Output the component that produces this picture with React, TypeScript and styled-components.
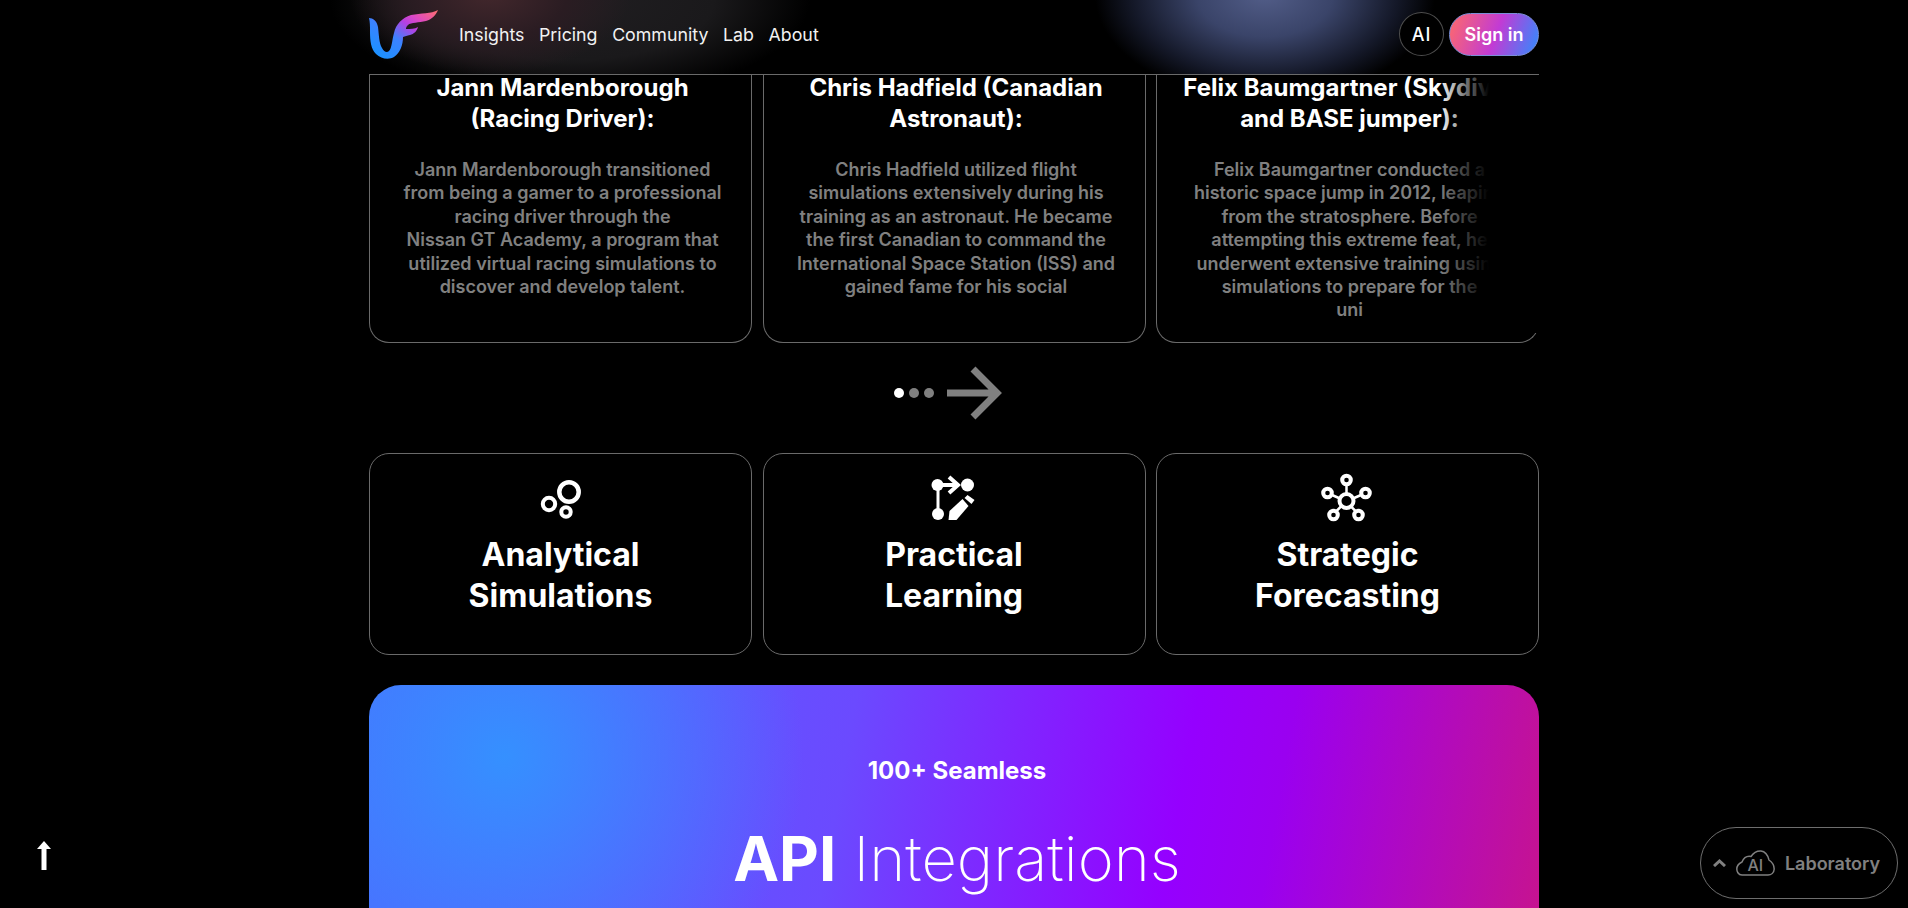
import React from 'react';
import styled, { createGlobalStyle } from 'styled-components';

const GlobalStyle = createGlobalStyle`
  html, body {
    margin: 0;
    height: 100%;
    background: #000;
    overflow: hidden;
  }
  body {
    font-family: Inter, "Liberation Sans", sans-serif;
    color: #fff;
  }
`;

const Page = styled.div`
  height: 908px;
  overflow: hidden;
  background: #000;
  display: flex;
  flex-direction: column;
`;

const Header = styled.header`
  flex: none;
  background:
    radial-gradient(ellipse 170px 105px at 1265px -5px, #525d88 0%, #3a4469 40%, #141828 78%, transparent 100%),
    radial-gradient(ellipse 140px 80px at 490px -5px, #42272c 0%, #2a1c22 55%, transparent 100%),
    radial-gradient(ellipse 240px 100px at 570px 0, #201e21 0%, #1a191b 60%, transparent 100%);
`;

const HeaderInner = styled.div`
  width: 1170px;
  height: 68px;
  margin: 0 auto;
  border-bottom: 1px solid #6a6a6a;
  display: flex;
  align-items: center;
  padding-bottom: 6px;
`;

const LogoMark = styled.svg`
  width: 69px;
  height: 49px;
  flex: none;
`;

const Nav = styled.nav`
  display: flex;
  gap: 14.6px;
  margin-left: 21px;
  font-size: 17.8px;
  color: #f2f2f2;
`;

const Actions = styled.div`
  margin-left: auto;
  display: flex;
  align-items: center;
  gap: 5px;
`;

const AiButton = styled.button`
  width: 45px;
  height: 44px;
  border-radius: 50%;
  border: 1px solid #4d4d4d;
  background: #000;
  color: #fff;
  font: 500 18px Inter, sans-serif;
  letter-spacing: 1px;
  padding: 0;
`;

const SignIn = styled.button`
  width: 90px;
  height: 43px;
  border-radius: 22px;
  border: 1px solid #7b8ed8;
  background: linear-gradient(110deg, #ff6a6a 0%, #c23bd4 52%, #2f8cff 100%);
  color: #fff;
  font: 600 18px Inter, sans-serif;
  padding: 0;
`;

const Main = styled.main`
  width: 1170px;
  margin: 0 auto;
`;

const Carousel = styled.div`
  position: relative;
  display: grid;
  grid-template-columns: repeat(3, 383px);
  gap: 10.5px;
`;

const EdgeFade = styled.div`
  position: absolute;
  top: 0;
  right: 0;
  width: 100px;
  height: 258px;
  background: linear-gradient(to right, rgba(0, 0, 0, 0) 0%, #000 50%);
`;

const StoryCard = styled.article`
  height: 268px;
  box-sizing: border-box;
  border: 1px solid #6a6a6a;
  border-top: none;
  border-radius: 0 0 20px 20px;
  padding: 0 24px 0 28px;
  text-align: center;
`;

const StoryTitle = styled.h3`
  margin: -3px -20px 0;
  font-size: 24px;
  line-height: 31px;
  font-weight: 700;
  white-space: pre;
`;

const StoryText = styled.p`
  margin: 24px -20px 0;
  font-size: 18px;
  line-height: 23.4px;
  font-weight: 600;
  color: #808080;
  white-space: pre;
`;

const Pager = styled.div`
  height: 110px;
  box-sizing: border-box;
  padding-bottom: 10px;
  display: flex;
  align-items: center;
  justify-content: center;
  gap: 5px;
`;

const Dot = styled.span<{ $active?: boolean }>`
  width: 10px;
  height: 10px;
  border-radius: 50%;
  background: ${p => (p.$active ? '#fff' : '#808080')};
`;

const PagerArrow = styled.svg`
  width: 56px;
  height: 56px;
  margin: 0 12px 0 8px;
`;

const Features = styled.div`
  display: grid;
  grid-template-columns: repeat(3, 383px);
  gap: 10.5px;
`;

const FeatureCard = styled.article`
  height: 202px;
  box-sizing: border-box;
  border: 1px solid #6a6a6a;
  border-radius: 20px;
  padding-top: 20px;
  display: flex;
  flex-direction: column;
  align-items: center;
`;

const FeatureIcon = styled.svg`
  width: 50px;
  height: 50px;
  flex: none;
  overflow: visible;
`;

const FeatureTitle = styled.h2`
  margin: 10px 0 0;
  font-size: 32px;
  line-height: 41px;
  font-weight: 700;
  text-align: center;
  white-space: pre-line;
`;

const ApiPanel = styled.section`
  margin-top: 30px;
  height: 300px;
  border-radius: 32px;
  background:
    radial-gradient(circle 300px at 135px 72px, #3590ff 0%, rgba(53, 144, 255, 0) 100%),
    linear-gradient(100deg, #4d6aff 0%, #6b4aff 40%, #9500ff 68%, #9a00f0 76%, #c8148c 100%);
  text-align: center;
  padding: 71px 0 0 6px;
  box-sizing: border-box;
`;

const ApiEyebrow = styled.div`
  font-size: 24px;
  line-height: 30px;
  font-weight: 700;
`;

const ApiTitle = styled.div`
  margin-top: 34px;
  font-size: 61.5px;
  line-height: 78px;
  font-weight: 200;

  strong {
    font-weight: 700;
  }
`;

const ScrollTop = styled.button`
  position: fixed;
  left: 37px;
  bottom: 38px;
  width: 14px;
  height: 29px;
  padding: 0;
  border: none;
  background: none;
  display: flex;
`;

const LabPill = styled.button`
  position: fixed;
  right: 10px;
  bottom: 9px;
  width: 198px;
  height: 72px;
  box-sizing: border-box;
  border: 1px solid #6e6e6e;
  border-radius: 36px;
  background: #000;
  color: #808080;
  font: 600 18px Inter, sans-serif;
  display: flex;
  align-items: center;
  justify-content: center;
  gap: 10px;
  padding: 0 5px 0 0;
`;

const stories = [
  {
    title: 'Jann Mardenborough\n(Racing Driver):',
    text: 'Jann Mardenborough transitioned\nfrom being a gamer to a professional\nracing driver through the\nNissan GT Academy, a program that\nutilized virtual racing simulations to\ndiscover and develop talent.',
  },
  {
    title: 'Chris Hadfield (Canadian\nAstronaut):',
    text: 'Chris Hadfield utilized flight\nsimulations extensively during his\ntraining as an astronaut. He became\nthe first Canadian to command the\nInternational Space Station (ISS) and\ngained fame for his social',
  },
  {
    title: 'Felix Baumgartner (Skydiver\nand BASE jumper):',
    text: 'Felix Baumgartner conducted a\nhistoric space jump in 2012, leaping\nfrom the stratosphere. Before\nattempting this extreme feat, he\nunderwent extensive training using\nsimulations to prepare for the\nuni',
  },
];

const Logo = () => (
  <LogoMark viewBox="0 0 69 49">
    <defs>
      <linearGradient id="logoGrad" x1="0.1" y1="0.85" x2="1" y2="0">
        <stop offset="0" stopColor="#1e90ff" />
        <stop offset="0.32" stopColor="#3c82ff" />
        <stop offset="0.58" stopColor="#b640e2" />
        <stop offset="0.72" stopColor="#dc48c4" />
        <stop offset="1" stopColor="#ff6f6a" />
      </linearGradient>
    </defs>
    <path
      fill="url(#logoGrad)"
      d="M0 8 C4 8 8 11 9 17 C10 25 10 33 13 38 C15 42 18 43 20 41 C23 38 23 30 25 23 C27 14 33 8 42 5 C52 3 62 4 69 0 C67 5 63 9 57 11 C50 13 42 12 39 15 C37 17 37 18 37 19 C41 19 46 19 49 17 C48 21 45 24 41 25 C38 26 36 26 34 27 C34 35 31 43 25 47 C20 50 12 49 7 44 C2 39 1 31 1 22 C1 16 1 12 0 8 Z"
    />
  </LogoMark>
);

const CirclesIcon = () => (
  <FeatureIcon viewBox="0 0 50 50" fill="none" stroke="#fff" strokeWidth="4.500">
    <circle cx="33" cy="18" r="9.700" />
    <circle cx="13" cy="30" r="6.200" strokeWidth="4" />
    <circle cx="30" cy="38" r="4.700" strokeWidth="4" />
  </FeatureIcon>
);

const BranchEditIcon = () => (
  <FeatureIcon viewBox="0 0 50 50" fill="#fff">
    <circle cx="8.500" cy="11" r="6" />
    <circle cx="9" cy="40" r="6" />
    <circle cx="38.500" cy="11" r="6.500" />
    <rect x="7.500" y="11" width="3" height="28" />
    <rect x="8.500" y="9" width="20" height="4" />
    <path d="M20 3l9 8-9 8" fill="none" stroke="#fff" strokeWidth="4" />
    <path d="M19.500 46 L20.500 37 L33.500 25 L39.500 32 L27.500 46 Z" />
    <path d="M35.500 24 L38.500 21 L45.500 26 L42.500 30 Z" />
  </FeatureIcon>
);

const HubIcon = () => (
  <FeatureIcon viewBox="0 0 50 50" fill="none" stroke="#fff" strokeWidth="4">
    <circle cx="23.500" cy="27" r="7" />
    <circle cx="23.500" cy="6" r="4.300" />
    <circle cx="4.500" cy="19" r="4.300" />
    <circle cx="42.500" cy="19" r="4.300" />
    <circle cx="10.500" cy="41" r="4.300" />
    <circle cx="35.500" cy="41" r="4.300" />
    <path d="M23.500 11v9M9 21l8 3.500M38 21l-8 3.500M13.500 37l5-5M32.500 37l-5-5" strokeWidth="2.500" />
  </FeatureIcon>
);

const AiCloud = () => (
  <svg width="39" height="26" viewBox="0 0 39 26" fill="none" stroke="#808080" strokeWidth="1.500">
    <path d="M6 25 C2 25 0.800 21 0.800 19 C0.800 15 4 13 6 12 C8 7 12 6 15 6.500 C18 2 22 0.800 25 1 C30 1.500 32 6 33 10 C36 12 38.200 15 38.200 19 C38 23 35 25 32 25 Z" />
    <text x="11.500" y="20.500" fill="#808080" stroke="none" fontFamily="Inter, sans-serif" fontSize="16" fontWeight="500">AI</text>
  </svg>
);

export default function App() {
  return (
    <Page>
      <GlobalStyle />
      <Header>
        <HeaderInner>
          <Logo />
          <Nav>
            <span>Insights</span>
            <span>Pricing</span>
            <span>Community</span>
            <span>Lab</span>
            <span>About</span>
          </Nav>
          <Actions>
            <AiButton>AI</AiButton>
            <SignIn>Sign in</SignIn>
          </Actions>
        </HeaderInner>
      </Header>
      <Main>
        <Carousel>
          {stories.map(s => (
            <StoryCard key={s.title}>
              <StoryTitle>{s.title}</StoryTitle>
              <StoryText>{s.text}</StoryText>
            </StoryCard>
          ))}
          <EdgeFade />
        </Carousel>
        <Pager>
          <Dot $active />
          <Dot />
          <Dot />
          <PagerArrow viewBox="0 0 56 56" fill="none" stroke="#808080" strokeWidth="7">
            <path d="M0 28h50M26 4l24 24-24 24" />
          </PagerArrow>
        </Pager>
        <Features>
          <FeatureCard>
            <CirclesIcon />
            <FeatureTitle>{'Analytical\nSimulations'}</FeatureTitle>
          </FeatureCard>
          <FeatureCard>
            <BranchEditIcon />
            <FeatureTitle>{'Practical\nLearning'}</FeatureTitle>
          </FeatureCard>
          <FeatureCard>
            <HubIcon />
            <FeatureTitle>{'Strategic\nForecasting'}</FeatureTitle>
          </FeatureCard>
        </Features>
        <ApiPanel>
          <ApiEyebrow>100+ Seamless</ApiEyebrow>
          <ApiTitle>
            <strong>API</strong> Integrations
          </ApiTitle>
        </ApiPanel>
      </Main>
      <ScrollTop aria-label="Back to top">
        <svg width="14" height="29" viewBox="0 0 14 29" fill="#fff">
          <path d="M7 0L14 8H9.500V29H4.500V8H0Z" />
        </svg>
      </ScrollTop>
      <LabPill>
        <svg width="13" height="8" viewBox="0 0 13 8" fill="none" stroke="#808080" strokeWidth="3">
          <path d="M1 7l5.500-5 5.500 5" />
        </svg>
        <AiCloud />
        Laboratory
      </LabPill>
    </Page>
  );
}
